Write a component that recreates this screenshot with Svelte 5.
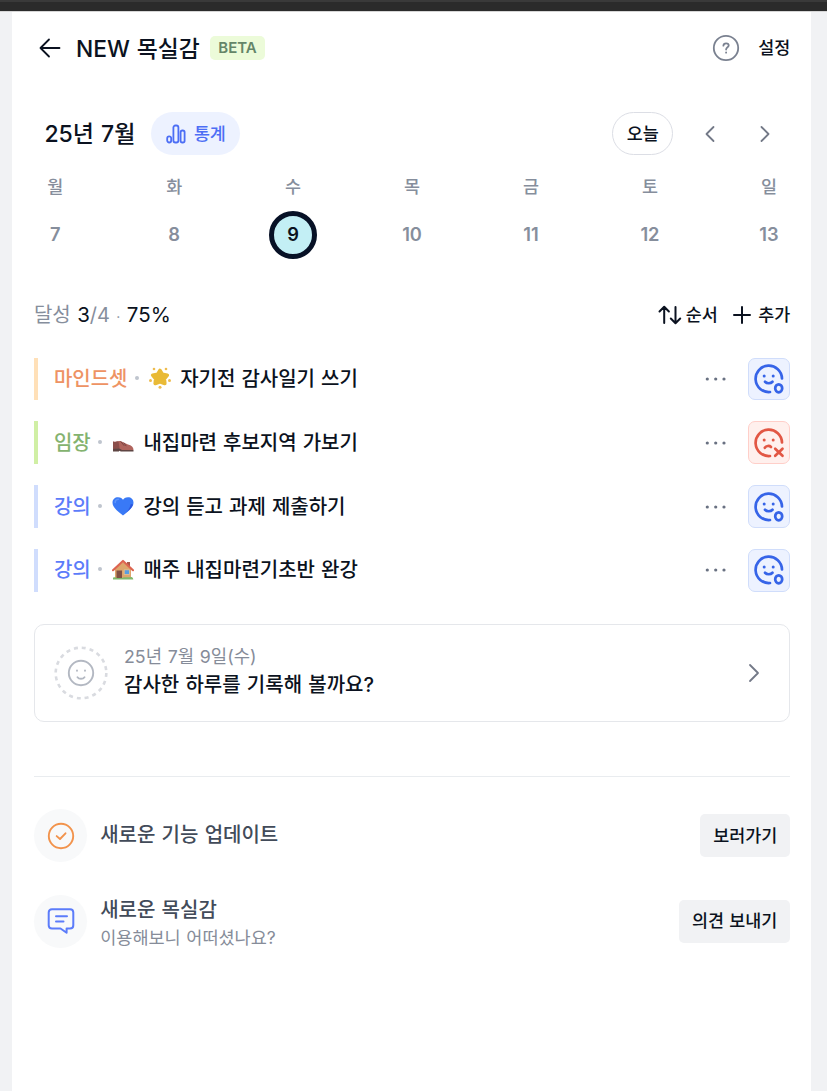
<script>
  const days = [
    { name: '월', date: 7 },
    { name: '화', date: 8 },
    { name: '수', date: 9 },
    { name: '목', date: 10 },
    { name: '금', date: 11 },
    { name: '토', date: 12 },
    { name: '일', date: 13 },
  ];
  let selected = $state(9);

  let goals = $state([
    { tag: '마인드셋', color: 'orange', emoji: 'star', title: '자기전 감사일기 쓰기', done: true },
    { tag: '임장', color: 'green', emoji: 'shoe', title: '내집마련 후보지역 가보기', done: false },
    { tag: '강의', color: 'blue', emoji: 'heart', title: '강의 듣고 과제 제출하기', done: true },
    { tag: '강의', color: 'blue', emoji: 'house', title: '매주 내집마련기초반 완강', done: true },
  ]);
</script>

{#snippet emojiIcon(name)}
  <svg class="emoji" width="22" height="22" viewBox="0 0 22 22">
    {#if name === 'star'}
      <path d="M11 3.5L13.2 7.2L18.3 8.2L15.3 11.8L15.8 16.5L11 14.8L6.2 16.5L6.7 11.8L3.7 8.2L8.8 7.2Z" fill="#e9ba36" stroke="#e9ba36" stroke-width="3.6" />
      <g fill="#eebc50">
        <circle cx="5" cy="2" r="1.3" /><circle cx="17" cy="2" r="1.3" />
        <circle cx="1.5" cy="13.6" r="1.5" /><circle cx="20.5" cy="13.6" r="1.5" />
        <circle cx="11" cy="20.3" r="1.5" />
      </g>
    {:else if name === 'shoe'}
      <path d="M1 10.5C3 11.5 6 9.5 8.5 10L16 13.5C19.5 14.3 21.5 16 21.5 19H1Z" fill="#b0645d" />
      <path d="M1 10.5C3 11.5 5 10.5 6.5 10.3L7.5 17L1 18.5Z" fill="#8b4e4a" />
      <path d="M9 10.8L12 14.5M12 12L14 14.8" stroke="#794442" stroke-width="1" />
      <path d="M1 18L7 17.2L10 19H21.5V20.5H9L7 19.7V20.5H1Z" fill="#5e4543" />
    {:else if name === 'heart'}
      <path d="M11 20.5C8 17.5 .5 13.5 .5 7.8C.5 4 3 2.2 6 2.2C8.7 2.2 10.3 3.6 11 4.8C11.7 3.6 13.3 2.2 16 2.2C19 2.2 21.5 4 21.5 7.8C21.5 13.5 14 17.5 11 20.5Z" fill="#3979f6" />
      <path d="M3.2 7.5C3.1 5.3 4.6 4.2 6.4 4.2" fill="none" stroke="#5c94fa" stroke-width="1.6" />
      <path d="M21 9.5C19.5 14.4 13.8 17.4 11 20.2C15.5 16.8 18 13 18.8 9Z" fill="#2d56dd" />
    {:else}
      <rect x="15" y="3" width="3" height="7" fill="#a9594b" />
      <path d="M3 9.5L11 3L19 9.5V19.5H3Z" fill="#dda56c" />
      <path d="M1 11.2L11 2L21 11.2" fill="none" stroke="#dd6450" stroke-width="2.2" />
      <rect x="4.5" y="11.5" width="5.5" height="8" fill="#805044" />
      <rect x="12.5" y="10.8" width="5" height="4.7" fill="#589de0" stroke="#f0c78f" stroke-width=".7" />
      <path d="M1 18.7C3 17.5 4 18.7 4.5 19H10L12 18.3H18C20 17.3 21 18.3 21.3 20.5H1Z" fill="#80b86c" />
    {/if}
  </svg>
{/snippet}

<div class="topbar"></div>
<main>
  <header>
    <button class="plain back" aria-label="뒤로">
      <svg width="22" height="20" viewBox="0 0 22 20" class="line"><path d="M20.5 10H1.5M10 1.5L1.5 10L10 18.5" /></svg>
    </button>
    <h1>NEW 목실감</h1>
    <span class="beta">BETA</span>
    <svg class="help" width="28" height="28" viewBox="0 0 28 28">
      <circle cx="14" cy="14" r="12.2" />
      <path d="M11.4 11.7C11.5 10.2 12.6 9.3 14.1 9.3C15.7 9.3 16.7 10.2 16.7 11.5C16.7 13.3 14.1 13.3 14.1 15.5" />
      <path d="M14.1 18.3V18.7" />
    </svg>
    <button class="plain setting">설정</button>
  </header>

  <section class="month">
    <h2>25년 7월</h2>
    <button class="stats">
      <svg width="20" height="20" viewBox="0 0 20 20">
        <rect x="1.2" y="12.3" width="4" height="6.2" rx="2" />
        <rect x="7.4" y="1.5" width="5" height="17" rx="2" />
        <rect x="14.6" y="6.5" width="4" height="12" rx="1.8" />
      </svg>
      통계
    </button>
    <button class="today" onclick={() => (selected = 9)}>오늘</button>
    <button class="plain arrow" aria-label="이전"><svg width="12" height="18" viewBox="0 0 12 18" class="line"><path d="M9.5 2L2.5 9L9.5 16" /></svg></button>
    <button class="plain arrow" aria-label="다음"><svg width="12" height="18" viewBox="0 0 12 18" class="line"><path d="M2.5 2L9.5 9L2.5 16" /></svg></button>
  </section>

  <section class="week">
    {#each days as day}
      <button class="plain day" onclick={() => (selected = day.date)}>
        <span class="name">{day.name}</span>
        <span class="date" class:selected={selected === day.date}>{day.date}</span>
      </button>
    {/each}
  </section>

  <section class="summary">
    <p>달성 <b>3</b>/4 <i>·</i> <b>75%</b></p>
    <button class="plain">
      <svg width="24" height="20" viewBox="0 0 24 20" class="line bold"><path d="M6.2 18V2M1.5 6.5L6.2 1.8L10.9 6.5M17.5 2V18M12.8 13.5L17.5 18.2L22.2 13.5" /></svg>
      순서
    </button>
    <button class="plain add">
      <svg width="18" height="18" viewBox="0 0 18 18" class="line bold"><path d="M9 1V17M1 9H17" /></svg>
      추가
    </button>
  </section>

  <ul>
    {#each goals as goal}
      <li class={goal.color}>
        <span class="tag">{goal.tag}</span>
        <span class="dot"></span>
        {@render emojiIcon(goal.emoji)}
        <span class="title">{goal.title}</span>
        <svg class="more" width="22" height="4" viewBox="0 0 22 4"><circle cx="2.3" cy="2" r="1.6" /><circle cx="10.7" cy="2" r="1.6" /><circle cx="19" cy="2" r="1.6" /></svg>
        <button class="face" class:fail={!goal.done} aria-label={goal.title} onclick={() => (goal.done = !goal.done)}>
          <svg width="32" height="32" viewBox="0 0 32 32">
            <path d="M29 15.5A13.2 13.2 0 1 0 17 29" />
            {#if goal.done}
              <path d="M12 18.8C13.8 20.7 17.7 20.7 19.5 18.8" />
              <ellipse cx="25.7" cy="25.3" rx="3.5" ry="4" />
            {:else}
              <path d="M11.8 20.8C13.2 18.6 16.4 18.4 18 20" />
              <path d="M22.2 21.8L29.5 28.7M29.5 21.8L22.2 28.7" />
            {/if}
            <circle class="eye" cx="11.2" cy="13" r="1.5" />
            <circle class="eye" cx="20.2" cy="13" r="1.5" />
          </svg>
        </button>
      </li>
    {/each}
  </ul>

  <section class="diary">
    <svg class="smile" width="54" height="54" viewBox="0 0 54 54">
      <circle class="dash" cx="27" cy="27" r="25.3" />
      <circle cx="27" cy="27" r="12.2" />
      <path d="M23.5 31.2C25 33.3 29 33.3 30.5 31.2" />
      <path d="M23 24.5V24.7M31 24.5V24.7" />
    </svg>
    <div>
      <p class="sub">25년 7월 9일(수)</p>
      <p class="strong">감사한 하루를 기록해 볼까요?</p>
    </div>
    <svg class="line chev" width="14" height="22" viewBox="0 0 14 22"><path d="M3 3L11 11L3 19" /></svg>
  </section>

  <hr />

  <section class="notice">
    <span class="circle">
      <svg width="28" height="28" viewBox="0 0 28 28" class="check"><circle cx="14" cy="14" r="12.2" /><path d="M9.7 14.1L13 17L18.5 11.3" /></svg>
    </span>
    <p class="strong">새로운 기능 업데이트</p>
    <button>보러가기</button>
  </section>
  <section class="notice">
    <span class="circle">
      <svg width="28" height="28" viewBox="0 0 28 28" class="chat"><path d="M5 2.3H23Q26.3 2.3 26.3 5.6V18.2Q26.3 21.5 23 21.5H19.6V25.7L13.5 21.5H5Q1.7 21.5 1.7 18.2V5.6Q1.7 2.3 5 2.3ZM9 9.3H20M9 14.6H16.5" /></svg>
    </span>
    <div>
      <p class="strong">새로운 목실감</p>
      <p class="sub">이용해보니 어떠셨나요?</p>
    </div>
    <button>의견 보내기</button>
  </section>
</main>

<style>
  :global(body) {
    background: #f1f2f4;
    color: #0b1220;
    font-family: Inter, "Noto Sans CJK KR", sans-serif;
  }

  .topbar {
    height: 12px;
    background: linear-gradient(#3a3a3a 2px, #2b2b2b 2px);
    border-bottom: 1px solid #d6d6d6;
    box-sizing: border-box;
  }

  main {
    box-sizing: border-box;
    width: 799px;
    height: 1079px;
    margin-left: 12.4px;
    padding: 0 21.2px 0 21.5px;
    background: #fff;
    overflow: hidden;
  }

  h1, h2, p, ul {
    margin: 0;
    padding: 0;
    font-weight: 500;
    white-space: nowrap;
  }

  svg {
    display: block;
    flex: none;
    fill: none;
    stroke-linecap: round;
    stroke-linejoin: round;
  }

  button {
    font: 500 17.4px/24px Inter, "Noto Sans CJK KR", sans-serif;
    color: #0b1220;
    border: 0;
    padding: 0;
    box-sizing: border-box;
    display: flex;
    align-items: center;
    justify-content: center;
    white-space: nowrap;
    cursor: pointer;
  }

  .plain {
    background: none;
  }

  .line {
    stroke: #0b1220;
    stroke-width: 1.8;
  }

  .line.bold {
    stroke-width: 2;
  }

  header {
    display: flex;
    align-items: center;
    height: 72px;
    margin-bottom: 28px;
  }

  .back {
    margin-left: 5px;
  }

  h1 {
    margin-left: 15px;
    padding-bottom: 2px;
    font-size: 22.8px;
    word-spacing: 1px;
  }

  .beta {
    margin-left: 10px;
    padding: 0 8.5px;
    border-radius: 5px;
    background: #ecfbd9;
    color: #648568;
    font-size: 15px;
    font-weight: 600;
    line-height: 24px;
  }

  .help {
    margin-left: auto;
    stroke: #7a8190;
    stroke-width: 1.8;
  }

  .setting {
    margin-left: 18px;
  }

  .month {
    display: flex;
    align-items: center;
    height: 43px;
    padding-left: 10.5px;
  }

  h2 {
    font-size: 23px;
    padding-bottom: 4px;
    word-spacing: 1px;
  }

  .stats {
    gap: 8px;
    width: 89px;
    height: 43px;
    margin-left: 16px;
    border-radius: 22px;
    background: #edf2ff;
    color: #4c6ef5;
  }

  .stats svg {
    stroke: #4c6ef5;
    stroke-width: 1.8;
  }

  .today {
    width: 61px;
    height: 43px;
    margin: 0 3px 0 auto;
    border: 1px solid #dcdee5;
    border-radius: 22px;
    background: #fff;
  }

  .arrow {
    width: 43px;
    height: 43px;
    margin-left: 12px;
  }

  .arrow:last-child {
    margin-right: 4px;
  }

  .arrow svg, .chev {
    stroke: #737987;
  }

  .week {
    display: flex;
    justify-content: space-between;
    margin-top: 20px;
  }

  .day {
    flex-direction: column;
    width: 42.6px;
    color: #868e9c;
  }

  .date {
    display: grid;
    place-items: center;
    box-sizing: border-box;
    width: 48px;
    height: 48px;
    margin-top: 12px;
    border: 5.3px solid transparent;
    border-radius: 50%;
    font-size: 18.3px;
    font-weight: 600;
    padding-bottom: 3px;
  }

  .date.selected {
    border-color: #071126;
    background: #c3eff5;
    color: #0b1220;
  }

  .summary {
    display: flex;
    align-items: center;
    height: 42px;
    margin-top: 34px;
    gap: 15.5px;
  }

  .summary p {
    margin-right: auto;
    padding-bottom: 2px;
    color: #868e9c;
    font-size: 20px;
    font-weight: 400;
    word-spacing: 0.8px;
  }

  .summary b {
    color: #0b1220;
    font-weight: 400;
    font-size: 20.5px;
  }

  .summary i {
    font-style: normal;
    font-size: 14px;
  }

  .summary button {
    gap: 3.5px;
    padding-top: 1px;
  }

  .summary .add {
    gap: 7px;
  }

  ul {
    display: grid;
    gap: 21.2px;
    margin-top: 22.5px;
    list-style: none;
  }

  li {
    display: flex;
    align-items: center;
    height: 42.7px;
    box-sizing: border-box;
    border-left: 4px solid;
    padding-left: 16px;
    font-size: 20px;
  }

  li.orange { border-color: #ffe0b8; }
  li.green { border-color: #d0efa5; }
  li.blue { border-color: #d0ddfd; }
  .orange .tag { color: #ee9363; }
  .green .tag { color: #84b36f; }
  .blue .tag { color: #5c7cfa; }

  .tag, .title {
    padding-bottom: 3px;
    font-weight: 500;
  }

  .dot {
    width: 4px;
    height: 4px;
    margin: 0 10px 2px 7px;
    border-radius: 50%;
    background: #bfc5ce;
  }

  .emoji {
    margin-bottom: 1px;
  }

  .title {
    margin-left: 9.7px;
    word-spacing: 0.7px;
  }

  .more {
    margin-left: auto;
    fill: #697182;
  }

  .face {
    width: 42.7px;
    height: 42.7px;
    margin-left: 20.5px;
    border: 1.3px solid #d0ddfb;
    border-radius: 7px;
    background: #edf2ff;
    --ink: #3664e8;
  }

  .face.fail {
    border-color: #ffcfc9;
    background: #fff0ed;
    --ink: #e25744;
  }

  .face svg {
    stroke: var(--ink);
    stroke-width: 2.7;
  }

  .face .eye {
    fill: var(--ink);
    stroke: none;
  }

  .diary {
    display: flex;
    align-items: center;
    box-sizing: border-box;
    height: 98px;
    margin-top: 32px;
    padding: 0 28px 0 19.5px;
    border: 1px solid #e5e7eb;
    border-radius: 10px;
  }

  .smile {
    stroke: #b3b8c2;
    stroke-width: 1.9;
  }

  .smile .dash {
    stroke: #d9dbe0;
    stroke-width: 2.6;
    stroke-linecap: butt;
    stroke-dasharray: 4 3.948;
  }

  .diary div {
    margin-left: 15.6px;
    padding-bottom: 4px;
  }

  .sub {
    color: #868c99;
    font-size: 17.5px;
    font-weight: 400;
    line-height: 28px;
    word-spacing: 0.7px;
  }

  .diary .sub {
    font-size: 17.8px;
  }

  .strong {
    font-size: 20px;
    line-height: 28px;
    word-spacing: 0.9px;
  }

  .chev {
    margin-left: auto;
  }

  hr {
    height: 1px;
    margin: 54px 0 32px;
    border: 0;
    background: #e9ecef;
  }

  .notice {
    display: flex;
    align-items: center;
    height: 54px;
    margin-bottom: 31.5px;
  }

  .circle {
    display: grid;
    place-items: center;
    width: 53.3px;
    height: 53.3px;
    border-radius: 50%;
    background: #f8f9fa;
    margin-right: 13px;
  }

  .check {
    stroke: #f2934c;
    stroke-width: 1.9;
  }

  .chat {
    stroke: #5c7cfa;
    stroke-width: 2;
  }

  .notice .strong {
    color: #424b59;
    padding-bottom: 1px;
  }

  .notice div {
    padding-top: 5px;
  }

  .notice div .strong {
    padding-bottom: 0;
  }

  .notice button {
    height: 43px;
    margin-left: auto;
    padding: 0 13px;
    border-radius: 5px;
    background: #f1f2f4;
    word-spacing: 0.6px;
  }
</style>
